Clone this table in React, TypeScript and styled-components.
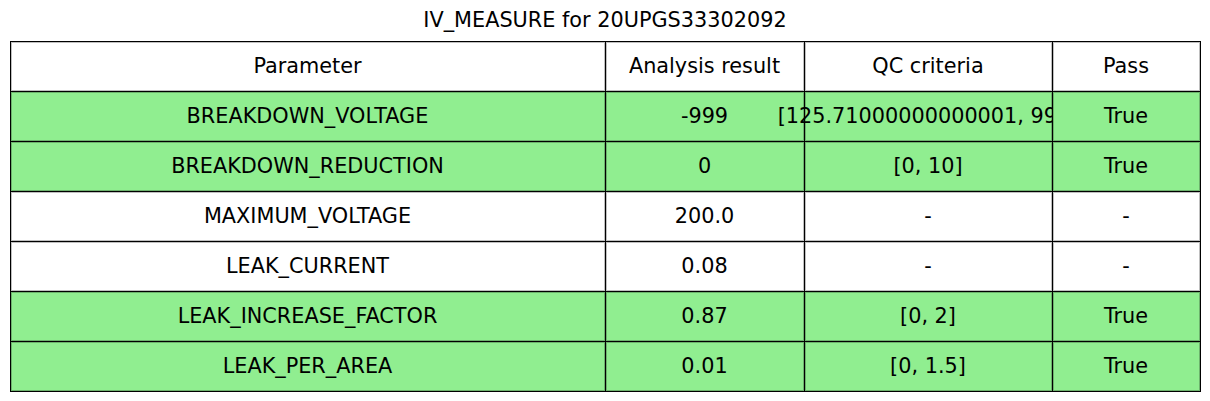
import React from "react";
import styled, { createGlobalStyle } from "styled-components";

const GlobalStyle = createGlobalStyle`
  body {
    margin: 0;
    background: #ffffff;
    font-family: "DejaVu Sans", "Liberation Sans", sans-serif;
    color: #000000;
  }
`;

const Figure = styled.div`
  width: 1210px;
  height: 401px;
  padding: 0 10px;
  box-sizing: border-box;
`;

const Title = styled.h1`
  margin: 0;
  height: 41px;
  padding-top: 8px;
  box-sizing: border-box;
  font-size: 20.8px;
  font-weight: normal;
  line-height: 24px;
  text-align: center;
`;

const Table = styled.div`
  display: grid;
  grid-template-columns: 595px 199px 248px 148px;
  grid-auto-rows: 50px;
  width: 1190px;
`;

const Cell = styled.div<{ $green?: boolean; $top?: boolean }>`
  position: relative;
  z-index: ${({ $top }) => ($top ? 2 : "auto")};
  display: flex;
  align-items: center;
  justify-content: center;
  background: ${({ $green }) => ($green ? "#90ee90" : "#ffffff")};
  font-size: 20.8px;
  white-space: nowrap;

  &::after {
    content: "";
    position: absolute;
    left: 0;
    top: 0;
    right: -1px;
    bottom: -1px;
    border: 1px solid #000000;
    box-shadow: inset 0 0 0 1px rgba(0, 0, 0, 0.25);
    z-index: 3;
    pointer-events: none;
  }
`;

const CellText = styled.span`
  position: relative;
  z-index: 1;
`;

type Row = [string, string, string, string];

const header: Row = ["Parameter", "Analysis result", "QC criteria", "Pass"];

const rows: Row[] = [
  ["BREAKDOWN_VOLTAGE", "-999", "[125.71000000000001, 999]", "True"],
  ["BREAKDOWN_REDUCTION", "0", "[0, 10]", "True"],
  ["MAXIMUM_VOLTAGE", "200.0", "-", "-"],
  ["LEAK_CURRENT", "0.08", "-", "-"],
  ["LEAK_INCREASE_FACTOR", "0.87", "[0, 2]", "True"],
  ["LEAK_PER_AREA", "0.01", "[0, 1.5]", "True"],
];

const App = () => {
  return (
    <Figure>
      <GlobalStyle />
      <Title>IV_MEASURE for 20UPGS33302092</Title>
      <Table>
        {header.map((h, i) => (
          <Cell key={h} $top={i === 3}>
            <CellText>{h}</CellText>
          </Cell>
        ))}
        {rows.map((r) => {
          const green = r[3] === "True";
          return r.map((v, i) => (
            <Cell key={r[0] + i} $green={green} $top={i === 3}>
              <CellText>{v}</CellText>
            </Cell>
          ));
        })}
      </Table>
    </Figure>
  );
};

export default App;
